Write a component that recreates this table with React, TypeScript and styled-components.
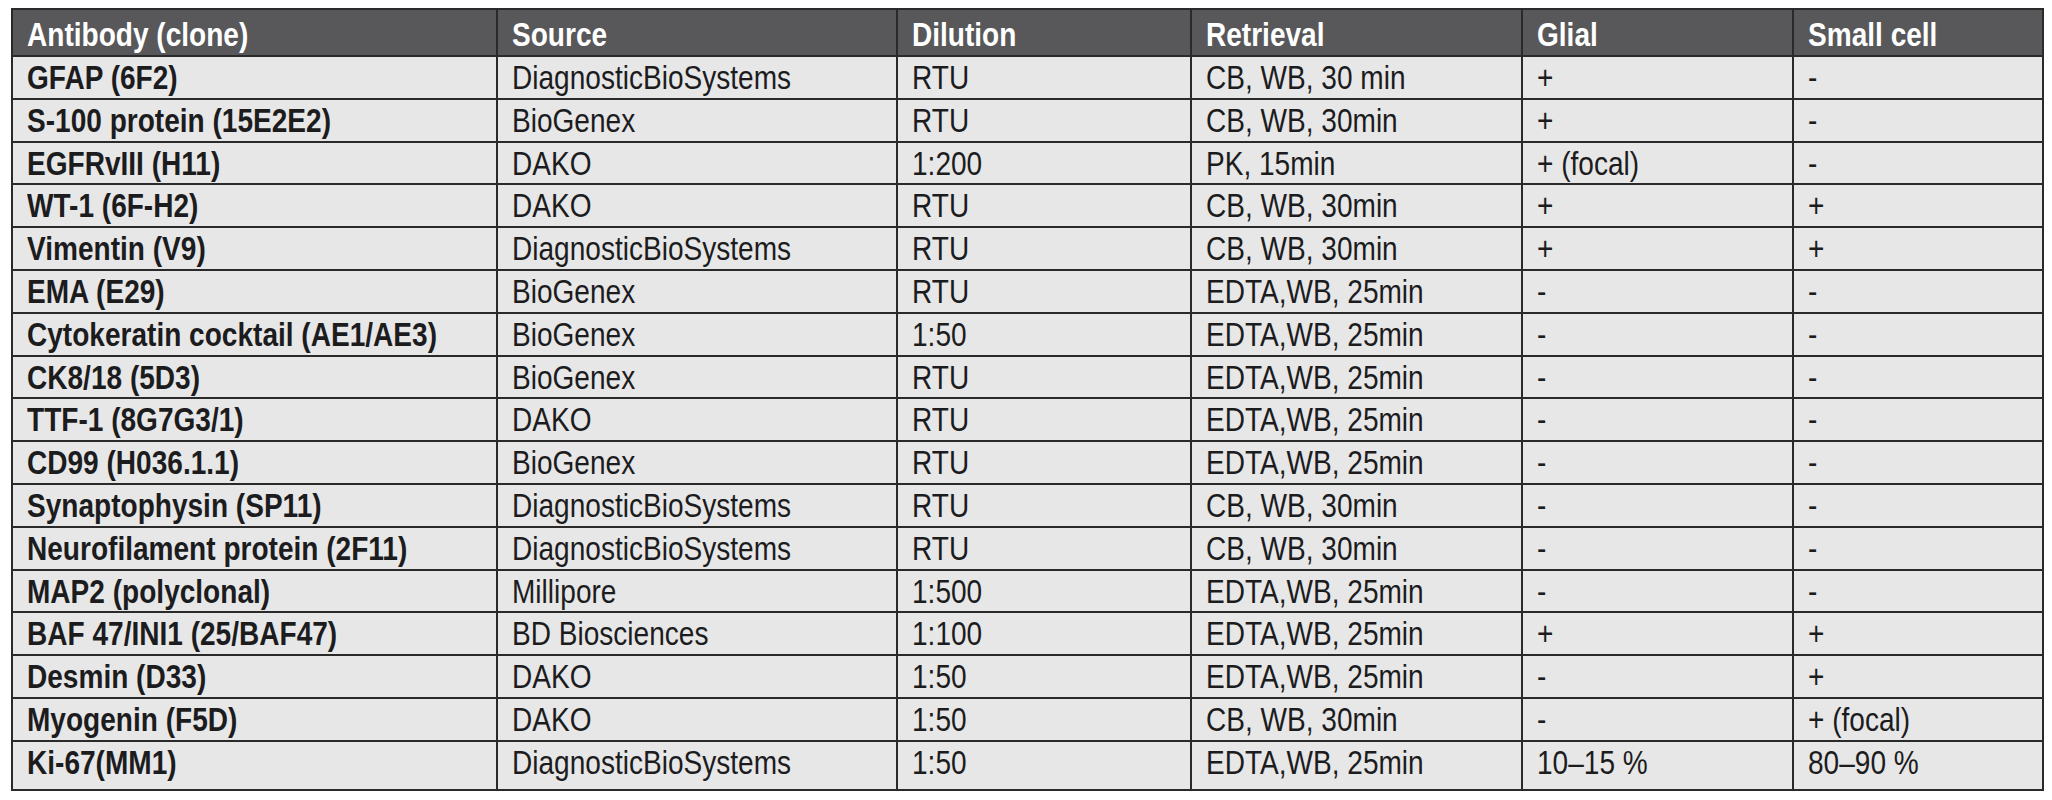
import React from "react";
import styled, { createGlobalStyle } from "styled-components";

const GlobalStyle = createGlobalStyle`
  html, body { margin: 0; padding: 0; background: #ffffff; }
  body { font-family: "Liberation Sans", Arial, sans-serif; }
`;

const Page = styled.div`
  padding: 8px 0 0 11px;
  background: #ffffff;
`;

const Table = styled.table`
  border-collapse: collapse;
  table-layout: fixed;
  width: 2031px;
  border: 2px solid #383838;
  font-family: "Liberation Sans", Arial, sans-serif;
`;

const HeadRow = styled.tr`
  height: 47px;
  background: #58585a;
`;

const BodyRow = styled.tr<{ $last?: boolean }>`
  height: ${(p) => (p.$last ? "49px" : "42.81px")};
  background: #e7e7e7;
`;

const HeadCell = styled.th`
  border: 2px solid #2a2a2a;
  padding: 8px 0 0 14px;
  text-align: left;
  vertical-align: top;
  color: #ffffff;
  font-size: 33px;
  line-height: 33px;
  font-weight: 700;
  white-space: nowrap;
  overflow: hidden;
`;

const Cell = styled.td<{ $bold?: boolean }>`
  border: 2px solid #2a2a2a;
  padding: 4px 0 0 14px;
  text-align: left;
  vertical-align: top;
  color: #1c1c1e;
  font-size: 33px;
  line-height: 33px;
  font-weight: ${(p) => (p.$bold ? 700 : 400)};
  white-space: nowrap;
  overflow: hidden;
`;

const Text = styled.span`
  display: inline-block;
  transform: scaleX(0.85);
  transform-origin: left center;
`;

const widths = [485, 400, 294, 331, 271, 250];

const headers = ["Antibody (clone)", "Source", "Dilution", "Retrieval", "Glial", "Small cell"];

const rows: string[][] = [
  ["GFAP (6F2)", "DiagnosticBioSystems", "RTU", "CB, WB, 30 min", "+", "-"],
  ["S-100 protein (15E2E2)", "BioGenex", "RTU", "CB, WB, 30min", "+", "-"],
  ["EGFRvIII (H11)", "DAKO", "1:200", "PK, 15min", "+ (focal)", "-"],
  ["WT-1 (6F-H2)", "DAKO", "RTU", "CB, WB, 30min", "+", "+"],
  ["Vimentin (V9)", "DiagnosticBioSystems", "RTU", "CB, WB, 30min", "+", "+"],
  ["EMA (E29)", "BioGenex", "RTU", "EDTA,WB, 25min", "-", "-"],
  ["Cytokeratin cocktail (AE1/AE3)", "BioGenex", "1:50", "EDTA,WB, 25min", "-", "-"],
  ["CK8/18 (5D3)", "BioGenex", "RTU", "EDTA,WB, 25min", "-", "-"],
  ["TTF-1 (8G7G3/1)", "DAKO", "RTU", "EDTA,WB, 25min", "-", "-"],
  ["CD99 (H036.1.1)", "BioGenex", "RTU", "EDTA,WB, 25min", "-", "-"],
  ["Synaptophysin (SP11)", "DiagnosticBioSystems", "RTU", "CB, WB, 30min", "-", "-"],
  ["Neurofilament protein (2F11)", "DiagnosticBioSystems", "RTU", "CB, WB, 30min", "-", "-"],
  ["MAP2 (polyclonal)", "Millipore", "1:500", "EDTA,WB, 25min", "-", "-"],
  ["BAF 47/INI1 (25/BAF47)", "BD Biosciences", "1:100", "EDTA,WB, 25min", "+", "+"],
  ["Desmin (D33)", "DAKO", "1:50", "EDTA,WB, 25min", "-", "+"],
  ["Myogenin (F5D)", "DAKO", "1:50", "CB, WB, 30min", "-", "+ (focal)"],
  ["Ki-67(MM1)", "DiagnosticBioSystems", "1:50", "EDTA,WB, 25min", "10–15 %", "80–90 %"],
];

export default function App() {
  return (
    <>
      <GlobalStyle />
      <Page>
        <Table>
          <colgroup>
            {widths.map((w, i) => (
              <col key={i} style={{ width: w }} />
            ))}
          </colgroup>
          <thead>
            <HeadRow>
              {headers.map((h) => (
                <HeadCell key={h}>
                  <Text>{h}</Text>
                </HeadCell>
              ))}
            </HeadRow>
          </thead>
          <tbody>
            {rows.map((r, i) => (
              <BodyRow key={i} $last={i === rows.length - 1}>
                {r.map((c, j) => (
                  <Cell key={j} $bold={j === 0}>
                    <Text>{c}</Text>
                  </Cell>
                ))}
              </BodyRow>
            ))}
          </tbody>
        </Table>
      </Page>
    </>
  );
}
